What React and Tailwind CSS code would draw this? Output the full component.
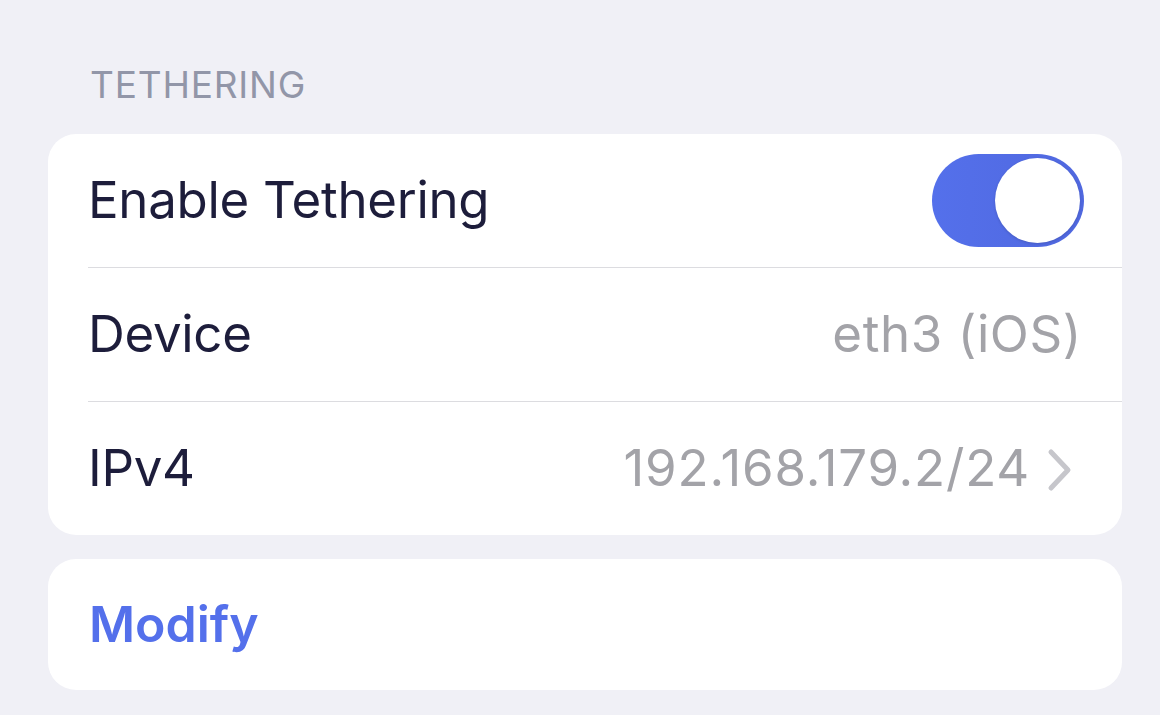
function Row({ label, children, divider }) {
  return (
    <div className={`flex items-stretch pl-[40px] ${divider ? 'h-[134px]' : 'h-[133px]'}`}>
      <div className={`flex flex-1 items-center justify-between pr-[40px] ${divider ? 'border-b border-[#dcdce0]' : ''}`}>
        <span className="text-[51px] tracking-[-0.3px] text-[#1d1d3b]">{label}</span>
        {children}
      </div>
    </div>
  )
}

export default function App() {
  return (
    <div className="min-h-[715px] bg-[#f0f0f6] pl-[48px] pr-[38px] pt-[62px] font-['Inter',sans-serif] antialiased">
      <p className="pl-[42px] text-[37px] leading-[46px] tracking-[0.8px] text-[#9296a8]">TETHERING</p>
      <div className="mt-[26px] overflow-hidden rounded-[28px] bg-white">
        <Row label="Enable Tethering" divider>
          <div className="-mr-[2px] flex h-[93px] w-[152px] items-center justify-end rounded-full bg-gradient-to-r from-[#5470eb] to-[#5068df] pr-[4px]">
            <div className="h-[85px] w-[85px] rounded-full bg-white shadow-[0_1px_3px_rgba(0,0,0,0.15)]" />
          </div>
        </Row>
        <Row label="Device" divider>
          <span className="text-[51px] tracking-[0.6px] text-[#a3a3a8]">eth3 (iOS)</span>
        </Row>
        <Row label="IPv4">
          <div className="mr-[8px] flex items-center gap-[16px]">
            <span className="text-[51px] tracking-[0.8px] text-[#a3a3a8]">192.168.179.2/24</span>
            <svg width="28" height="44" viewBox="0 0 28 44" fill="none" className="mt-[2px]">
              <path d="M5 4 L22 22 L5 40" stroke="#c6c6cb" strokeWidth="5" strokeLinecap="round" strokeLinejoin="round" />
            </svg>
          </div>
        </Row>
      </div>
      <div className="mt-[24px] flex h-[131px] items-center rounded-[28px] bg-white pl-[41px]">
        <span className="text-[50px] font-semibold tracking-[0px] text-[#5470eb]">Modify</span>
      </div>
    </div>
  )
}
